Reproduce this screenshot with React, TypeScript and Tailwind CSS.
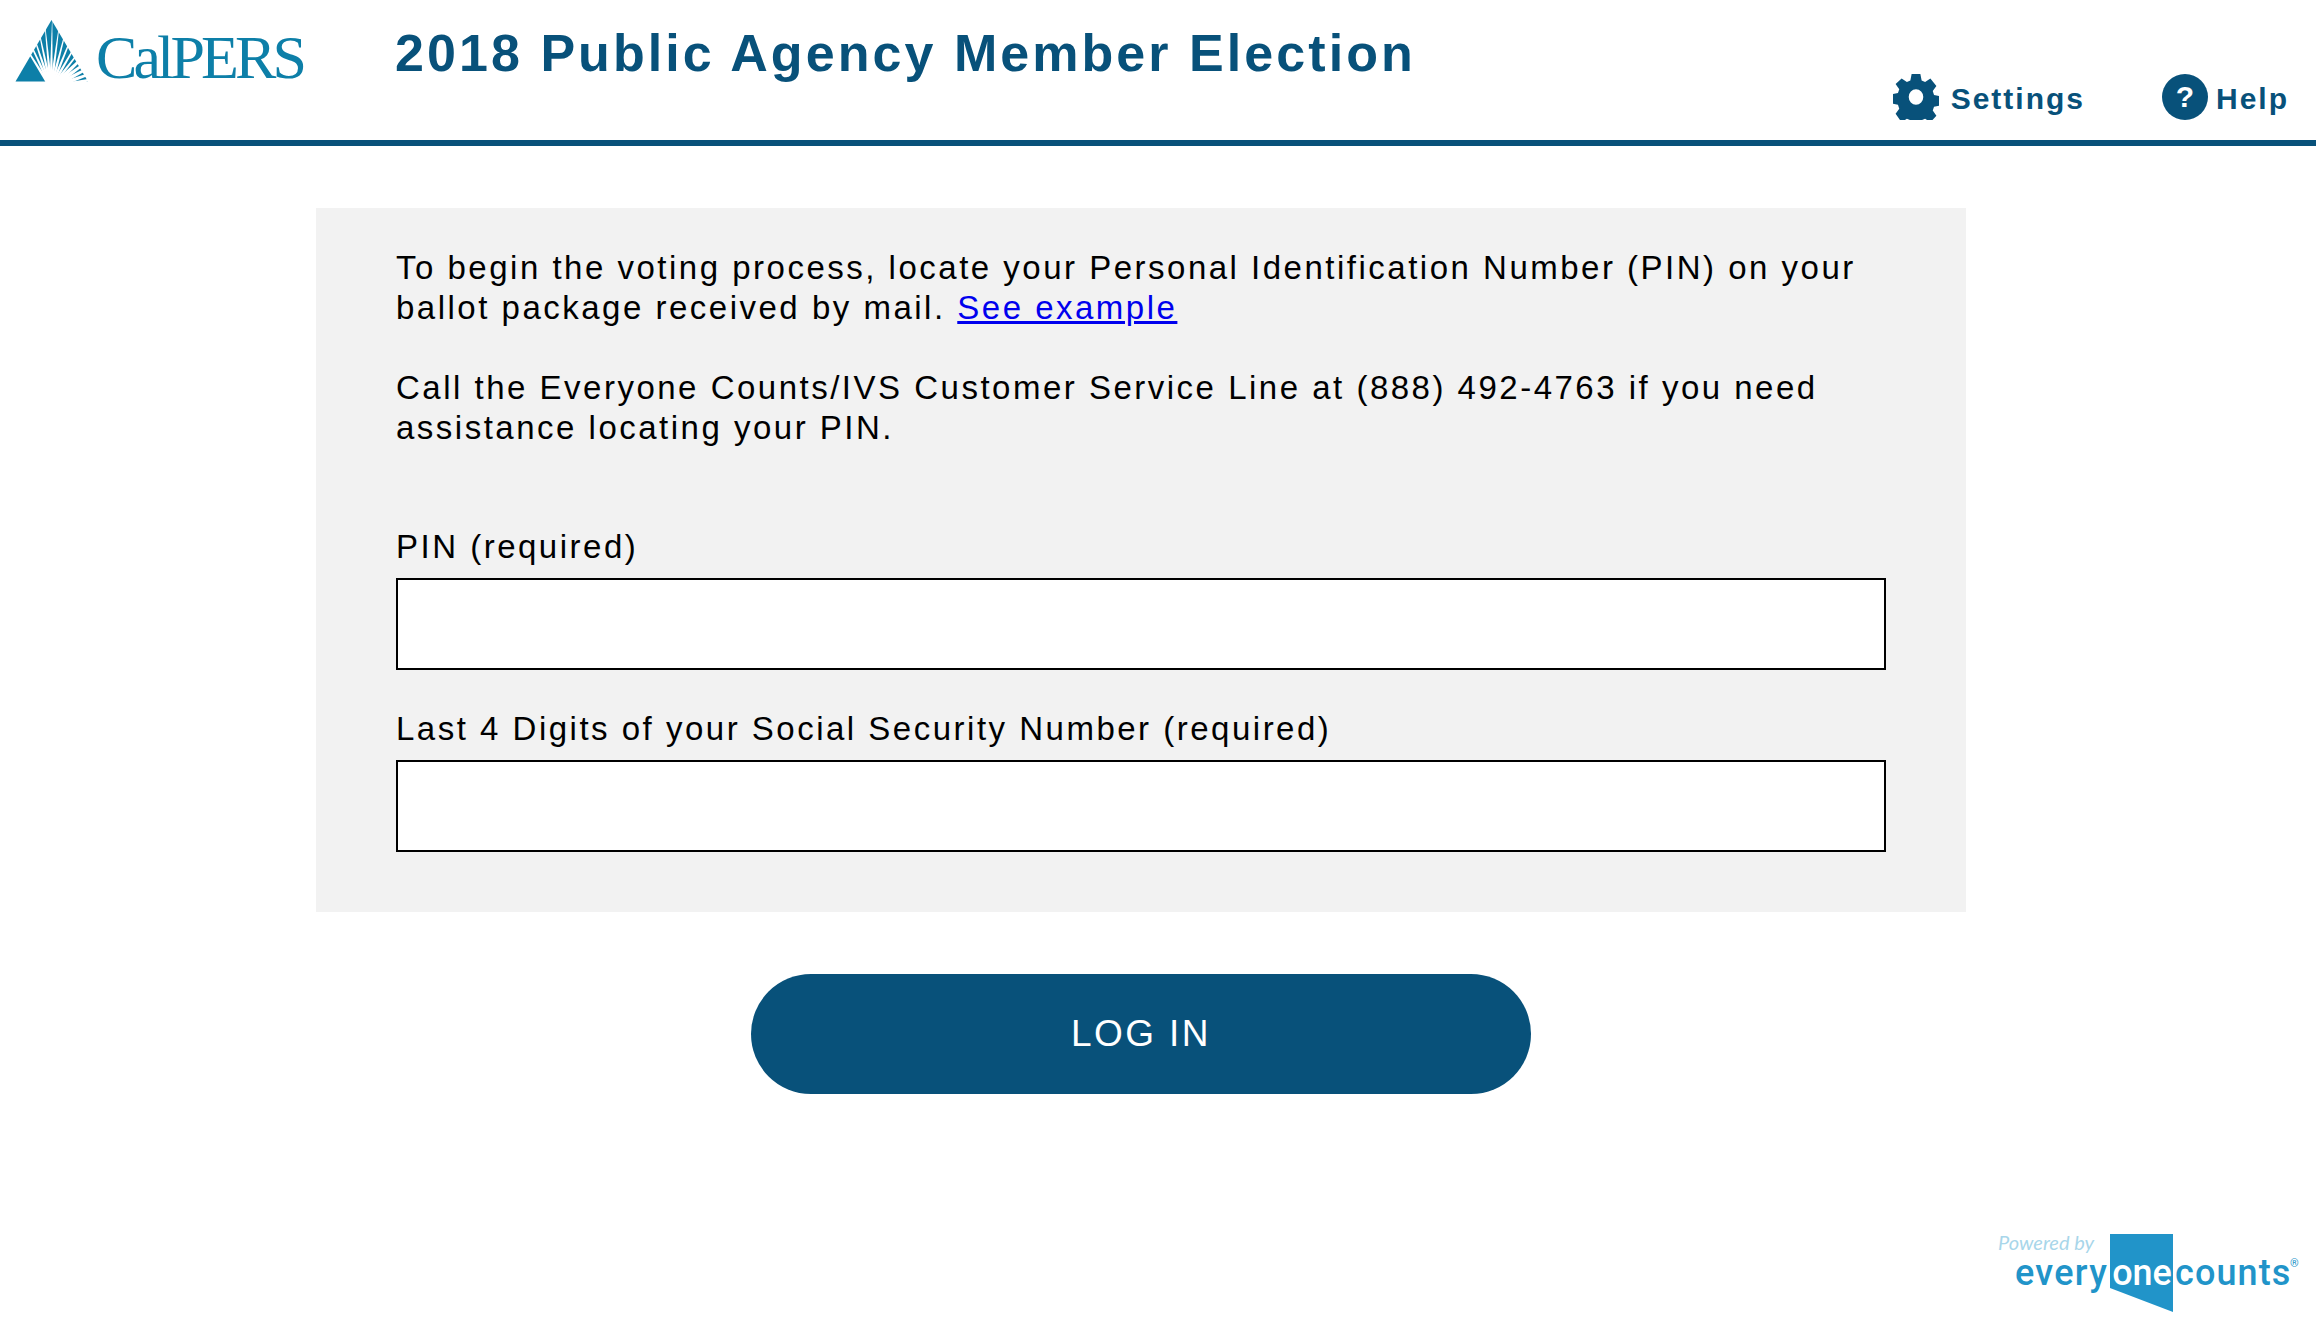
import { ReactNode } from "react"

// white wedges of the logo, as degrees from vertical
const rays = [-32, -25, -18.5, -12, -5.5, 1, 7.5, 14.5, 22, 30, 38, 46, 54, 62, 70, 78]

function wedge(deg: number) {
    const a = (deg * Math.PI) / 180
    const fx = 36
    const fy = 68
    const w = deg > 40 ? 2.6 : 1.7
    const tipX = fx + Math.sin(a) * 75
    const tipY = fy - Math.cos(a) * 75
    const px = Math.cos(a) * w
    const py = Math.sin(a) * w
    return `${fx - px},${fy - py} ${fx + px},${fy + py} ${tipX},${tipY}`
}

function Logo() {
    return (
        <div className="flex items-end">
            <svg width="74" height="62" viewBox="0 0 74 62" className="shrink-0">
                <path d="M36.5 0 L0.5 61.5 L73 61.5 Z" fill="#0d7fa8" />
                {rays.map((r) => (
                    <polygon key={r} points={wedge(r)} fill="#ffffff" />
                ))}
                <ellipse cx="42" cy="68" rx="14" ry="11" fill="#ffffff" />
            </svg>
            <span className="ml-[7px] font-['Liberation_Serif',serif] text-[62px] leading-[50px] tracking-[-3.9px] text-[#0d7fa8]">
                CalPERS
            </span>
        </div>
    )
}

function Gear() {
    return (
        <svg width="46" height="46" viewBox="0 0 24 24" fill="#08517a">
            <path
                fillRule="evenodd"
                d="M9.6 0h4.8l.7 3.4 1.9.8 2.9-1.9 3.3 3.9-2 2.7.7 2 3.6.7v4.8l-3.6.7-.7 2 2 2.7-3.3 3.4-2.9-1.9-1.9.8-.7 3.4H9.6l-.7-3.4-1.9-.8-2.9 1.9L.8 20.8l2-2.7-.7-2-3.6-.7v-4.8l3.6-.7.7-2-2-2.7L4.1 2.3 7 4.2l1.9-.8L9.6 0ZM12 8a4 4 0 1 0 0 8 4 4 0 0 0 0-8Z"
                transform="translate(0.6 0) scale(0.95 1)"
            />
        </svg>
    )
}

function Field({ label, children }: { label: string; children?: ReactNode }) {
    return (
        <div>
            <label className="block text-[33px] leading-[40px] tracking-[2.5px] text-black">{label}</label>
            <input type="text" className="mt-[11px] block h-[92px] w-full border-2 border-solid border-black bg-white" />
            {children}
        </div>
    )
}

export default function App() {
    return (
        <div className="relative h-[1340px] w-[2316px] overflow-hidden bg-white font-['Liberation_Sans',Arial,sans-serif]">
            <header className="flex h-[146px] border-b-[6px] border-solid border-[#08517a]">
                <div className="w-[395px] shrink-0 pl-[15px] pt-[20px]">
                    <Logo />
                </div>
                <h1 className="pt-[23px] text-[52px] font-bold leading-[60px] tracking-[3.05px] text-[#08517a]">
                    2018 Public Agency Member Election
                </h1>
                <div className="ml-auto flex items-start pr-[27px] pt-[74px] text-[#08517a]">
                    <div className="flex items-start gap-[12px]">
                        <Gear />
                        <span className="pt-[2px] text-[30px] font-bold leading-[46px] tracking-[2px]">Settings</span>
                    </div>
                    <div className="ml-[77px] flex items-start gap-[8px]">
                        <div className="flex h-[46px] w-[46px] items-center justify-center rounded-full bg-[#08517a] text-[30px] font-bold leading-none text-white">
                            ?
                        </div>
                        <span className="pt-[2px] text-[30px] font-bold leading-[46px] tracking-[2px]">Help</span>
                    </div>
                </div>
            </header>
            <main className="flex flex-col items-center pr-[34px]">
                <section className="mt-[62px] h-[704px] w-[1650px] bg-[#f2f2f2] px-[80px] pt-[40px]">
                    <p className="text-[33px] leading-[40px] tracking-[2.5px] text-black">
                        To begin the voting process, locate your Personal Identification Number (PIN) on your ballot package
                        received by mail. <a href="#" className="text-[#0000ee] underline">See example</a>
                    </p>
                    <p className="mt-[40px] text-[33px] leading-[40px] tracking-[2.5px] text-black">
                        Call the Everyone Counts/IVS Customer Service Line at (888) 492-4763 if you need assistance locating your PIN.
                    </p>
                    <div className="mt-[79px] flex flex-col gap-[39px]">
                        <Field label="PIN (required)" />
                        <Field label="Last 4 Digits of your Social Security Number (required)" />
                    </div>
                </section>
                <button className="mt-[62px] h-[120px] w-[780px] rounded-[60px] bg-[#08517a] text-[37px] tracking-[2.4px] text-white">
                    LOG IN
                </button>
            </main>
            <div className="absolute left-[1998px] top-[1233px] h-[80px] w-[310px]">
                <svg width="64" height="78" viewBox="0 0 64 78" className="absolute left-[112px] top-[1px]">
                    <path d="M0 0H63V78L0 54Z" fill="#2194c9" />
                </svg>
                <span className="absolute left-0 top-[-3px] font-['Lato',sans-serif] text-[20px] italic leading-[24px] text-[#a8d6ea]">
                    Powered by
                </span>
                <div className="absolute left-[17px] top-[17px] flex font-['Roboto',sans-serif] text-[36px] font-medium leading-[46px]">
                    <span className="w-[97px] tracking-[1.3px] text-[#2194c9]">every</span>
                    <span className="w-[60px] text-center text-white">one</span>
                    <span className="ml-[3px] tracking-[1.1px] text-[#2194c9]">counts</span>
                </div>
                <span className="absolute left-[292px] top-[25px] font-['Roboto',sans-serif] text-[11px] leading-[12px] text-[#2194c9]">®</span>
            </div>
        </div>
    )
}
